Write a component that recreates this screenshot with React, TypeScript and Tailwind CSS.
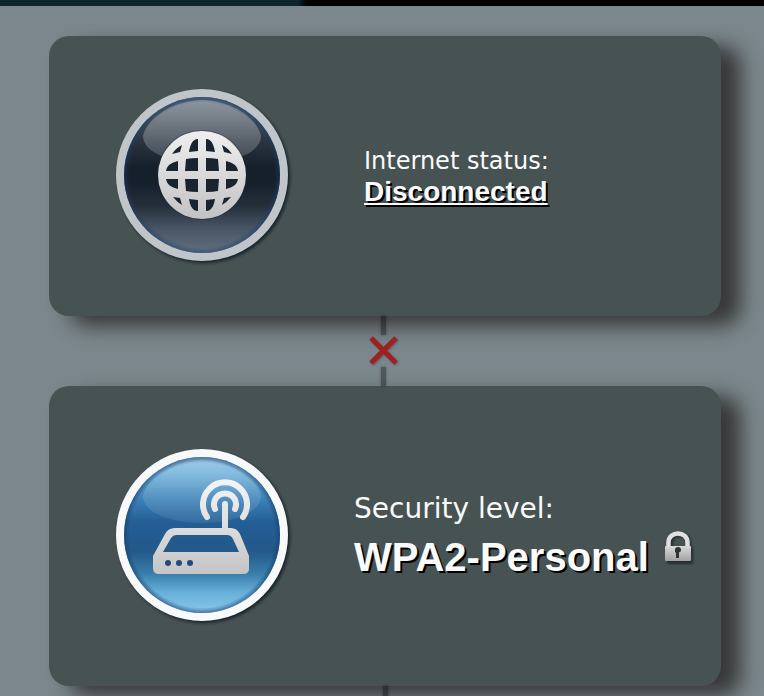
import React from 'react';

function Badge({ id, rim, stops, gloss, edge, children }: {
  id: string;
  rim: string;
  stops: [string, string][];
  gloss: number;
  edge: number;
  children: React.ReactNode;
}) {
  return (
    <svg className="block h-[180px] w-[180px] shrink-0" viewBox="1 1 180 180" aria-hidden="true">
      <defs>
        <linearGradient id={id + 'Fill'} x1="0" y1="0" x2="0" y2="1">
          {stops.map(([offset, color]) => <stop key={offset} offset={offset} stopColor={color} />)}
        </linearGradient>
        <linearGradient id={id + 'Gloss'} x1="0" y1="0" x2="0" y2="1">
          <stop offset="0" stopColor="#fff" stopOpacity={gloss} />
          <stop offset="1" stopColor="#fff" stopOpacity={gloss / 2} />
        </linearGradient>
        <radialGradient id={id + 'Edge'}>
          <stop offset="0.93" stopColor="#183e6e" stopOpacity="0" />
          <stop offset="1" stopColor="#183e6e" stopOpacity={edge} />
        </radialGradient>
        <linearGradient id={id + 'Ink'} gradientUnits="userSpaceOnUse" x1="0" y1="35" x2="0" y2="134">
          <stop offset="0" stopColor="#f5f5f5" />
          <stop offset="1" stopColor="#c2c2c3" />
        </linearGradient>
        <filter id={id + 'Blur'} x="-10%" y="-10%" width="120%" height="120%">
          <feGaussianBlur stdDeviation="1.5" />
        </filter>
      </defs>
      <circle cx="92" cy="92" r="86" fill="#101a20" opacity="0.85" filter={`url(#${id}Blur)`} />
      <circle cx="90" cy="90" r="86" fill={rim} />
      <circle cx="90" cy="90" r="78" fill={`url(#${id}Fill)`} />
      <path d="M31 51C36 30 65 15 90 15s54 15 59 36C149 68 120 78 90 78S31 68 31 51Z" fill={`url(#${id}Gloss)`} />
      <circle cx="90" cy="90" r="78" fill={`url(#${id}Edge)`} />
      {children}
    </svg>
  );
}

function GlobeBadge() {
  return (
    <Badge
      id="globe"
      rim="#bfc5c8"
      gloss={0.32}
      edge={0.5}
      stops={[['0', '#536779'], ['0.1', '#4b5662'], ['0.28', '#2b3541'], ['0.45', '#16202b'], ['0.55', '#16202b'], ['0.7', '#252f3c'], ['0.83', '#455262'], ['1', '#617080']]}
    >
      <circle cx="90" cy="90" r="45" fill="#17212c" opacity="0.35" />
      <circle cx="90" cy="90" r="44" fill="url(#globeInk)" />
      <g fill="#19242f">
        <path d="M86 54v12l-9 1c1-6 3-13 9-13ZM94 54v12l9 1c-1-6-3-13-9-13Z" />
        <path d="M86 126v-11l-9-1c1 6 3 12 9 12ZM94 126v-11l9-1c-1 6-3 12-9 12Z" />
        <path d="M74 74q6-1 12-1v13H73ZM106 74q-6-1-12-1v13h13ZM73 94h13v13q-7 0-12-1ZM107 94H94v13q7 0 12-1Z" />
        <path d="M54 86c1-6 5-8 12-10v10ZM126 86c-1-6-5-8-12-10v10ZM54 94h12v10c-7-2-11-4-12-10ZM126 94h-12v10c7-2 11-4 12-10Z" />
        <path d="M60 69q4-6 10-9l-2 7ZM120 69q-4-6-10-9l2 7ZM61 112q4 5 9 8l-2-7ZM119 112q-4 5-9 8l2-7Z" />
      </g>
    </Badge>
  );
}

function RouterBadge() {
  return (
    <Badge
      id="router"
      rim="#f8f9fa"
      gloss={0.16}
      edge={0.6}
      stops={[['0', '#8dbbe0'], ['0.1', '#72b3da'], ['0.28', '#397fb6'], ['0.42', '#235e95'], ['0.6', '#235889'], ['0.74', '#377ba9'], ['0.87', '#68b0da'], ['1', '#8ac8ea']]}
    >
      <g stroke="url(#routerInk)" fill="none" strokeLinecap="round">
        <path d="M95 72A22 22 0 1 1 131 72" strokeWidth="6" />
        <path d="M103 64A11 11 0 1 1 123 64" strokeWidth="6" />
        <path d="M113 59V85" strokeWidth="6" />
      </g>
      <path
        fill="url(#routerInk)"
        fillRule="evenodd"
        d="M63 83H119Q125 83 128 89L137 111V124Q137 129 131 129H47Q41 129 41 123V111L53 89Q56 83 63 83ZM64 90Q61 90 59 93L51 107H127L121 94Q119 90 115 90Z"
      />
      <g fill="#1f4b80">
        <circle cx="56" cy="118" r="3" />
        <circle cx="67" cy="118" r="3" />
        <circle cx="78" cy="118" r="3" />
      </g>
    </Badge>
  );
}

function Lock() {
  return (
    <svg className="h-9 w-8 shrink-0" viewBox="0 0 32 36" role="img" aria-label="Secured">
      <defs>
        <linearGradient id="lockInk" x1="0" y1="0" x2="0" y2="1">
          <stop offset="0" stopColor="#d9d9d9" />
          <stop offset="1" stopColor="#a2a2a2" />
        </linearGradient>
        <filter id="lockBlur" x="-20%" y="-20%" width="140%" height="140%">
          <feGaussianBlur stdDeviation="1" />
        </filter>
      </defs>
      <g opacity="0.55" filter="url(#lockBlur)">
        <rect x="4" y="18" width="26" height="17" rx="1" fill="#111" />
        <path d="M8 20V14C8 3 26 3 26 14v6" fill="none" stroke="#111" strokeWidth="4" />
      </g>
      <path d="M5.500 19v-5.500C5.500 1.500 24.500 1.500 24.500 13.500v5.500" fill="none" stroke="#e0e0e0" strokeWidth="4.500" />
      <rect x="2" y="17" width="26" height="15" rx="1" fill="url(#lockInk)" />
      <path d="M15 18a3 3 0 0 1 3 3q0 2-2 2.500V29h-3v-5.500h-1V21a3 3 0 0 1 3-3Z" fill="#303333" />
    </svg>
  );
}

function Cross() {
  return (
    <svg className="block h-8 w-8" viewBox="0 1 32 32" role="img" aria-label="No connection">
      <defs>
        <filter id="crossBlur"><feGaussianBlur stdDeviation="1" /></filter>
      </defs>
      <path d="M5 5 30 30M30 5 5 30" stroke="#414a4d" strokeWidth="5" opacity="0.6" filter="url(#crossBlur)" />
      <path d="M4 4 29 29M29 4 4 29" stroke="#a02022" strokeWidth="5" />
    </svg>
  );
}

const card = 'flex items-center rounded-[20px] bg-[#475253] pl-16 shadow-[20px_10px_20px_#383838]';
const wire = 'w-[5px] bg-black/35 shadow-[0_0_3px_#0005]';

export default function App() {
  return (
    <div className="flex h-screen flex-col overflow-hidden bg-[#7b878c] font-['DejaVu_Sans',Verdana,sans-serif] text-[#fafafa]">
      <div className="h-[6px] shrink-0 bg-linear-to-r from-[#10242c] from-39% to-black to-41%" />
      <main className="mt-[30px] mr-[43px] ml-[49px]">
        <section className={`${card} min-h-[280px]`}>
          <GlobeBadge />
          <div className="ml-[71px]">
            <div className="text-[24px] leading-[32px]">Internet status:</div>
            <a href="#status" className="block font-['Liberation_Sans',Arial,sans-serif] text-[28px] leading-[30px] font-bold underline decoration-2 underline-offset-2 [text-shadow:2px_2px_0_#000]">
              Disconnected
            </a>
          </div>
        </section>
        <div className="relative flex h-[70px] flex-col items-center pr-1">
          <div className={`${wire} h-[19px]`} />
          <Cross />
          <div className={`${wire} h-[19px]`} />
        </div>
        <section className={`${card} min-h-[300px]`}>
          <RouterBadge />
          <div className="ml-[61px] pt-[2px]">
            <div className="text-[28px] leading-[40px]">Security level:</div>
            <div className="flex items-start gap-3.5">
              <span className="font-['Liberation_Sans',Arial,sans-serif] text-[40px] leading-[56px] font-bold whitespace-nowrap [text-shadow:2px_2px_0_#000]">
                WPA2-Personal
              </span>
              <Lock />
            </div>
          </div>
        </section>
        <div className="relative flex h-[70px] flex-col items-center">
          <div className={`${wire} h-[19px]`} />
        </div>
      </main>
    </div>
  );
}
